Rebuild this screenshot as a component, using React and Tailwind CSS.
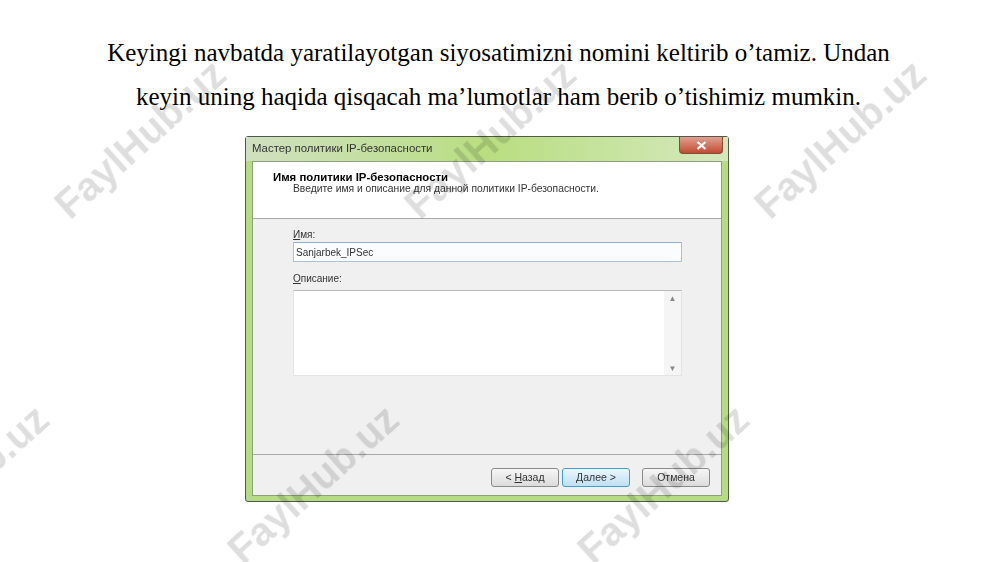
import React from 'react';

// centre of every watermark on the page
const marks = [
  { id: 1, cls: 'left-[140px] top-[139px]' },
  { id: 2, cls: 'left-[490px] top-[139px]' },
  { id: 3, cls: 'left-[840px] top-[139px]' },
  { id: 4, cls: 'left-[-37px] top-[484px]' },
  { id: 5, cls: 'left-[313px] top-[484px]' },
  { id: 6, cls: 'left-[663px] top-[484px]' },
];

function Watermark({ cls }) {
  return (
    <div className={`absolute ${cls} -translate-x-1/2 -translate-y-1/2 -rotate-[42deg] whitespace-nowrap font-['Liberation_Sans',sans-serif] text-[40px] font-bold leading-none text-black/[0.13] pointer-events-none blur-[0.5px]`}>
      FaylHub.uz
    </div>
  );
}

function WizardButton({ children, active }) {
  return (
    <button
      className={`block h-[19px] w-[68px] rounded-[3px] border text-[10.5px] leading-none text-[#333] ${
        active
          ? 'border-[#3c9fd0] bg-gradient-to-b from-[#eaf6fd] to-[#bfe0f2]'
          : 'border-[#8a8a8a] bg-gradient-to-b from-[#f6f6f6] to-[#dcdcdc]'
      }`}
    >
      {children}
    </button>
  );
}

function Dialog() {
  return (
    <div className="flex h-[366px] w-[484px] flex-col rounded-[3px] border border-[#4f5a49] bg-[#b5dc85] font-['Liberation_Sans',sans-serif] blur-[0.4px]">
      <div className="flex h-[24px] shrink-0 items-start justify-between bg-gradient-to-r from-[#d0e0c0] via-[#b8de80] to-[#d5e8bc] pl-[6px] pr-[5px]">
        <span className="pt-[5px] text-[11.4px] leading-[13px] text-[#333]">Мастер политики IP-безопасности</span>
        <div className="flex h-[17px] w-[44px] items-center justify-center rounded-b-[4px] border border-t-0 border-[#8a4a3a] bg-gradient-to-b from-[#e0a090] to-[#c04a30]">
          <svg width="11" height="9" viewBox="0 0 11 9" fill="none" stroke="#fff" strokeWidth="2.2">
            <path d="M1.5 1 9.5 8M9.5 1 1.5 8" />
          </svg>
        </div>
      </div>
      <div className="mx-[6px] mb-[5px] flex min-h-0 flex-1 flex-col border border-[#8fa080] bg-[#f0f0f0]">
        <div className="h-[57px] shrink-0 border-b border-[#a8a8a8] bg-white pl-[20px] pt-[9px]">
          <div className="text-[11.4px] font-bold leading-[12px] text-black">Имя политики IP-безопасности</div>
          <div className="pl-[20px] text-[10.3px] leading-[11px] text-[#333]">
            Введите имя и описание для данной политики IP-безопасности.
          </div>
        </div>
        <div className="flex min-h-0 flex-1 flex-col pl-[40px] pr-[39px] pt-[10px]">
          <div className="text-[10px] leading-[12px] text-[#333]"><span className="underline">И</span>мя:</div>
          <div className="mt-[1px] flex h-[20px] items-center rounded-[1px] border border-[#a9c1da] border-t-[#8fb0d0] bg-[#fbfcfd] pl-[2px] text-[10px] text-[#333]">
            Sanjarbek_IPSec
          </div>
          <div className="mt-[11px] text-[10px] leading-[12px] text-[#333]"><span className="underline">О</span>писание:</div>
          <div className="mt-[5px] flex h-[86px] justify-end border border-[#e4e4e4] border-t-[#b8b8b8] bg-white">
            <div className="flex w-[17px] flex-col items-center justify-between bg-[#f5f5f5] pb-[2px] pt-[4px] text-[8px] leading-none text-[#888]">
              <span>▲</span>
              <span>▼</span>
            </div>
          </div>
        </div>
        <div className="flex h-[41px] shrink-0 items-start border-t border-[#a8a8a8] pl-[238px] pt-[13px]">
          <WizardButton>&lt; <span className="underline">Н</span>азад</WizardButton>
          <div className="ml-[3px]">
            <WizardButton active><span className="underline">Д</span>алее &gt;</WizardButton>
          </div>
          <div className="ml-[12px]">
            <WizardButton>Отмена</WizardButton>
          </div>
        </div>
      </div>
    </div>
  );
}

export default function App() {
  return (
    <div className="relative h-[562px] w-[1000px] overflow-hidden bg-white">
      <div className="flex flex-col items-center pt-[31px]">
        <p className="ml-[-3px] text-center font-['Liberation_Serif',serif] text-[25px] leading-[44px] text-black">
          Keyingi navbatda yaratilayotgan siyosatimizni nomini keltirib o’tamiz. Undan
          <br />
          keyin uning haqida qisqacah ma’lumotlar ham berib o’tishimiz mumkin.
        </p>
        <div className="mt-[17px] ml-[-26px]">
          <Dialog />
        </div>
      </div>
      {marks.map(m => (
        <Watermark key={m.id} cls={m.cls} />
      ))}
    </div>
  );
}
